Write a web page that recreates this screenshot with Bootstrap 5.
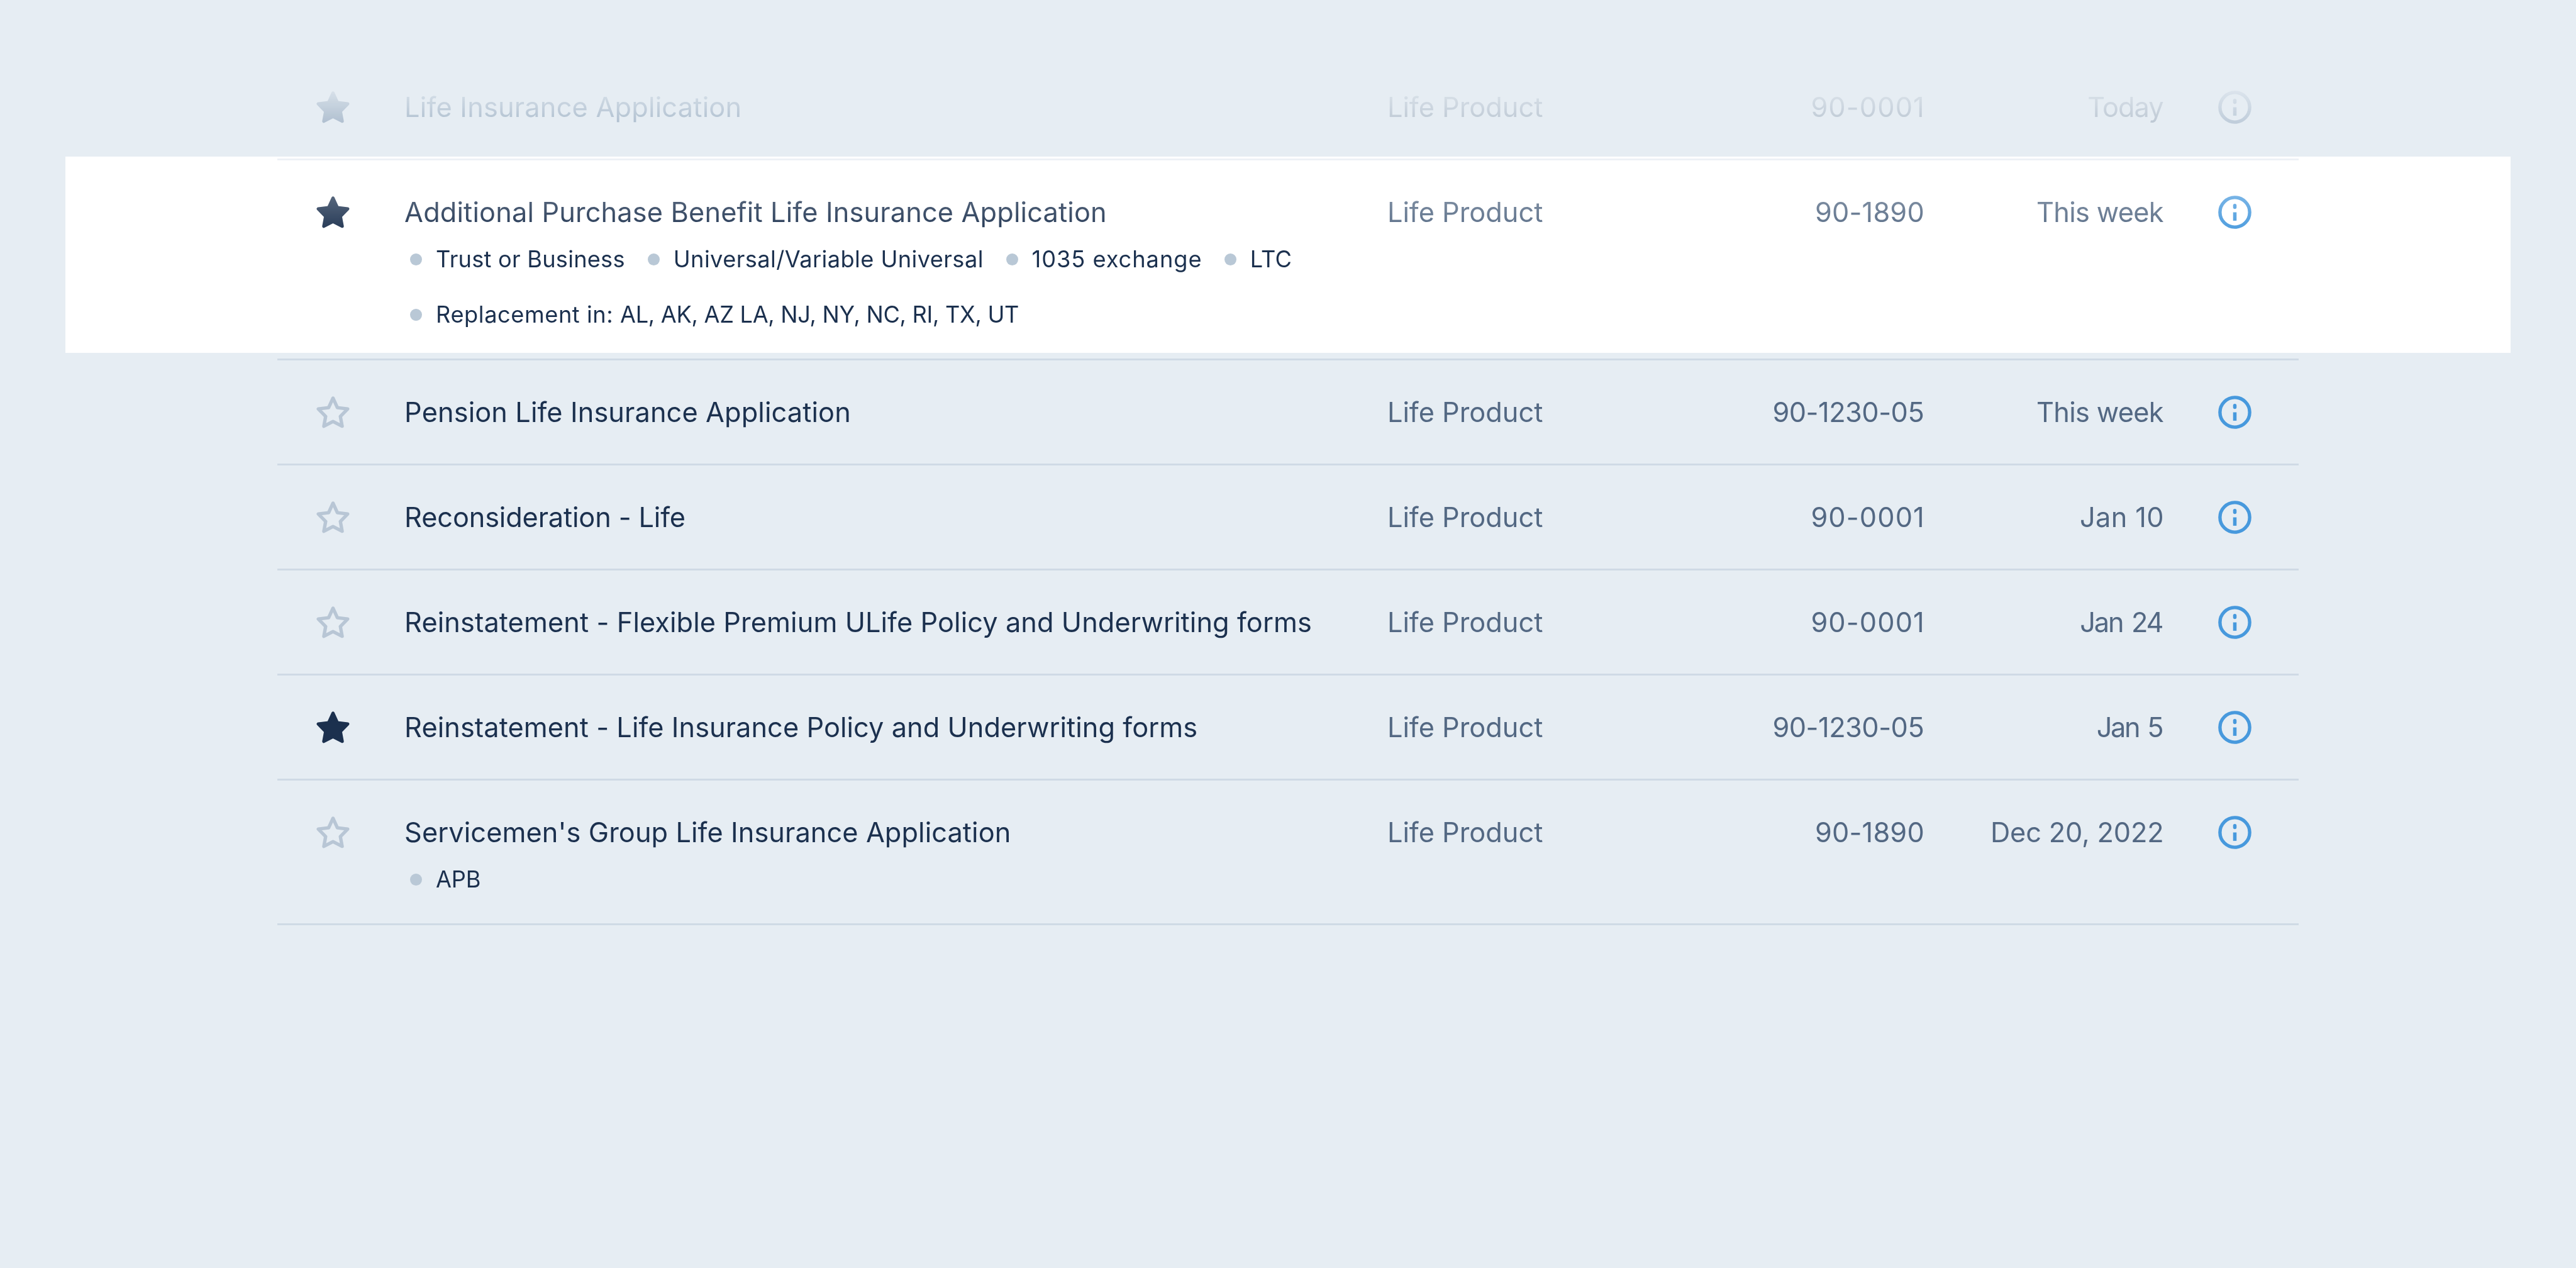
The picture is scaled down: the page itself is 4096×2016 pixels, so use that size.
<!DOCTYPE html>
<html lang="en">
<head>
<meta charset="utf-8">
<title>Life insurance forms</title>
<link href="https://cdn.jsdelivr.net/npm/bootstrap@5.3.0/dist/css/bootstrap.min.css" rel="stylesheet">
<style>
:root{--u:.7876923px}
body{background:#e6edf3;color:#1b304e;font-family:Inter,"Liberation Sans",sans-serif;font-weight:400;height:2016px;overflow:hidden}
.page-frame{height:2016px;padding:calc(112*var(--u)) calc(560*var(--u)) 0}
/* white band behind the active row */
.active-band{left:calc(132*var(--u));right:calc(132*var(--u));top:calc(316*var(--u));height:calc(396*var(--u));background:#fff}
/* rows dissolve toward the top */
.form-list{-webkit-mask-image:linear-gradient(to bottom,transparent calc(48*var(--u)),#000 calc(368*var(--u)));mask-image:linear-gradient(to bottom,transparent calc(48*var(--u)),#000 calc(368*var(--u)))}
.form-row{height:calc(212*var(--u));padding:calc(64*var(--u)) 0 0 calc(72*var(--u));border-bottom:calc(4*var(--u)) solid #cfdae5;font-size:calc(55*var(--u));line-height:calc(80*var(--u))}
.row-tall{height:calc(404*var(--u))}
.row-mid{height:calc(292*var(--u))}
.glyph{width:calc(80*var(--u));height:calc(80*var(--u))}
.star{color:#b8c6d5;margin-right:calc(104.5*var(--u))}
.star.on{color:#1b304e}
.info{color:#4799dd;margin-left:calc(104*var(--u))}
.c-title{width:calc(1984*var(--u))}
.c-kind{width:calc(600*var(--u))}
.c-num{width:calc(484*var(--u))}
.c-date{width:calc(483.5*var(--u))}
.c-kind,.c-num,.c-date{color:#536883}
.row-faded{border-bottom-color:#dde3ee}
.row-faded .c-title,.row-faded .star.on{color:#224974}
.row-faded .info{color:#5a789a}
.sp{letter-spacing:calc(var(--s)*var(--u));margin-right:calc(var(--s)*var(--u)*-1)}
.tags{font-size:calc(46*var(--u));line-height:calc(112*var(--u));column-gap:calc(46*var(--u));padding-left:calc(11.5*var(--u));margin-top:calc(-.7*var(--u))!important}
.tags li{gap:calc(28*var(--u))}
.tags i{width:calc(24*var(--u));height:calc(24*var(--u));background:#b9c8d6}
.s-a{--s:.26}.s-b{--s:.19}.s-c{--s:.13}.s-d{--s:-.19}.s-e{--s:.1}.s-f{--s:.07}.s-g{--s:.1}
.n-a{--s:1.4}.n-b{--s:.23}.n-c{--s:-.63}
.d-a{--s:-1.2}.d-b{--s:-.87}.d-c{--s:.48}.d-d{--s:-2.6;word-spacing:calc(4*var(--u))}.d-e{--s:-3;word-spacing:calc(4*var(--u))}.d-f{--s:-.2}
.g-a{--s:.29}.g-b{--s:.52}.g-c{--s:1.2}.g-d{--s:.3}.g-e{--s:-.4}.g-f{--s:-.3}
.g-e b{font-weight:400;letter-spacing:calc(.7*var(--u))}
</style>
<script src="https://cdn.jsdelivr.net/npm/bootstrap@5.3.0/dist/js/bootstrap.bundle.min.js"></script>
</head>
<body>
<svg class="d-none" aria-hidden="true">
  <symbol id="star" viewBox="0 0 24 24"><path d="M12 3.4 14.65 9.2 20.9 9.95 16.45 14.5 17.55 20.45 12 17.6 6.45 20.45 7.55 14.5 3.1 9.95 9.35 9.2Z" fill="none" stroke="currentColor" stroke-width="2.05" stroke-linejoin="round"/></symbol>
  <symbol id="star-on" viewBox="0 0 24 24"><path d="M12 3.35 14.65 9.15 20.95 9.9 16.5 14.5 17.6 20.5 12 17.6 6.4 20.5 7.5 14.5 3.05 9.9 9.35 9.15Z" fill="currentColor" stroke="currentColor" stroke-width="1.9" stroke-linejoin="round"/></symbol>
  <symbol id="info" viewBox="0 0 24 24"><circle cx="12" cy="12" r="9" fill="none" stroke="currentColor" stroke-width="2.05"/><rect x="10.95" y="6.85" width="2.1" height="3.15" rx="1.05" fill="currentColor"/><rect x="10.95" y="12" width="2.1" height="5.1" fill="currentColor"/></symbol>
</svg>
<main class="page-frame position-relative">
  <div class="active-band position-absolute"></div>
  <div class="form-list position-relative">

    <div class="form-row row-faded d-flex align-items-start">
      <svg class="glyph star on flex-shrink-0"><use href="#star-on"/></svg>
      <div class="c-title flex-shrink-0 text-nowrap"><span class="sp s-a">Life Insurance Application</span></div>
      <div class="c-kind flex-shrink-0">Life Product</div>
      <div class="c-num flex-shrink-0 text-end"><span class="sp n-a">90-0001</span></div>
      <div class="c-date flex-shrink-0 text-end"><span class="sp d-a">Today</span></div>
      <svg class="glyph info flex-shrink-0"><use href="#info"/></svg>
    </div>

    <div class="form-row row-tall d-flex align-items-start">
      <svg class="glyph star on flex-shrink-0"><use href="#star-on"/></svg>
      <div class="c-title flex-shrink-0 text-nowrap">
        <div><span class="sp s-b">Additional Purchase Benefit Life Insurance Application</span></div>
        <ul class="tags list-unstyled d-flex flex-wrap m-0">
          <li class="d-flex align-items-center"><i class="rounded-circle"></i><span class="sp g-a">Trust or Business</span></li>
          <li class="d-flex align-items-center"><i class="rounded-circle"></i><span class="sp g-b">Universal/Variable Universal</span></li>
          <li class="d-flex align-items-center"><i class="rounded-circle"></i><span class="sp g-c">1035 exchange</span></li>
          <li class="d-flex align-items-center"><i class="rounded-circle"></i><span class="sp g-d">LTC</span></li>
          <li class="d-flex align-items-center"><i class="rounded-circle"></i><span class="sp g-e"><b>Replacement in: </b>AL, AK, AZ LA, NJ, NY, NC, RI, TX, UT</span></li>
        </ul>
      </div>
      <div class="c-kind flex-shrink-0">Life Product</div>
      <div class="c-num flex-shrink-0 text-end"><span class="sp n-b">90-1890</span></div>
      <div class="c-date flex-shrink-0 text-end"><span class="sp d-b">This week</span></div>
      <svg class="glyph info flex-shrink-0"><use href="#info"/></svg>
    </div>

    <div class="form-row d-flex align-items-start">
      <svg class="glyph star flex-shrink-0"><use href="#star"/></svg>
      <div class="c-title flex-shrink-0 text-nowrap"><span class="sp s-c">Pension Life Insurance Application</span></div>
      <div class="c-kind flex-shrink-0">Life Product</div>
      <div class="c-num flex-shrink-0 text-end"><span class="sp n-c">90-1230-05</span></div>
      <div class="c-date flex-shrink-0 text-end"><span class="sp d-b">This week</span></div>
      <svg class="glyph info flex-shrink-0"><use href="#info"/></svg>
    </div>

    <div class="form-row d-flex align-items-start">
      <svg class="glyph star flex-shrink-0"><use href="#star"/></svg>
      <div class="c-title flex-shrink-0 text-nowrap"><span class="sp s-d">Reconsideration - Life</span></div>
      <div class="c-kind flex-shrink-0">Life Product</div>
      <div class="c-num flex-shrink-0 text-end"><span class="sp n-a">90-0001</span></div>
      <div class="c-date flex-shrink-0 text-end"><span class="sp d-c">Jan 10</span></div>
      <svg class="glyph info flex-shrink-0"><use href="#info"/></svg>
    </div>

    <div class="form-row d-flex align-items-start">
      <svg class="glyph star flex-shrink-0"><use href="#star"/></svg>
      <div class="c-title flex-shrink-0 text-nowrap"><span class="sp s-e">Reinstatement - Flexible Premium ULife Policy and Underwriting forms</span></div>
      <div class="c-kind flex-shrink-0">Life Product</div>
      <div class="c-num flex-shrink-0 text-end"><span class="sp n-a">90-0001</span></div>
      <div class="c-date flex-shrink-0 text-end"><span class="sp d-d">Jan 24</span></div>
      <svg class="glyph info flex-shrink-0"><use href="#info"/></svg>
    </div>

    <div class="form-row d-flex align-items-start">
      <svg class="glyph star on flex-shrink-0"><use href="#star-on"/></svg>
      <div class="c-title flex-shrink-0 text-nowrap"><span class="sp s-f">Reinstatement - Life Insurance Policy and Underwriting forms</span></div>
      <div class="c-kind flex-shrink-0">Life Product</div>
      <div class="c-num flex-shrink-0 text-end"><span class="sp n-c">90-1230-05</span></div>
      <div class="c-date flex-shrink-0 text-end"><span class="sp d-e">Jan 5</span></div>
      <svg class="glyph info flex-shrink-0"><use href="#info"/></svg>
    </div>

    <div class="form-row row-mid d-flex align-items-start">
      <svg class="glyph star flex-shrink-0"><use href="#star"/></svg>
      <div class="c-title flex-shrink-0 text-nowrap">
        <div><span class="sp s-g">Servicemen's Group Life Insurance Application</span></div>
        <ul class="tags list-unstyled d-flex flex-wrap m-0">
          <li class="d-flex align-items-center"><i class="rounded-circle"></i><span class="sp g-f">APB</span></li>
        </ul>
      </div>
      <div class="c-kind flex-shrink-0">Life Product</div>
      <div class="c-num flex-shrink-0 text-end"><span class="sp n-b">90-1890</span></div>
      <div class="c-date flex-shrink-0 text-end"><span class="sp d-f">Dec 20, 2022</span></div>
      <svg class="glyph info flex-shrink-0"><use href="#info"/></svg>
    </div>

  </div>
</main>
</body>
</html>
